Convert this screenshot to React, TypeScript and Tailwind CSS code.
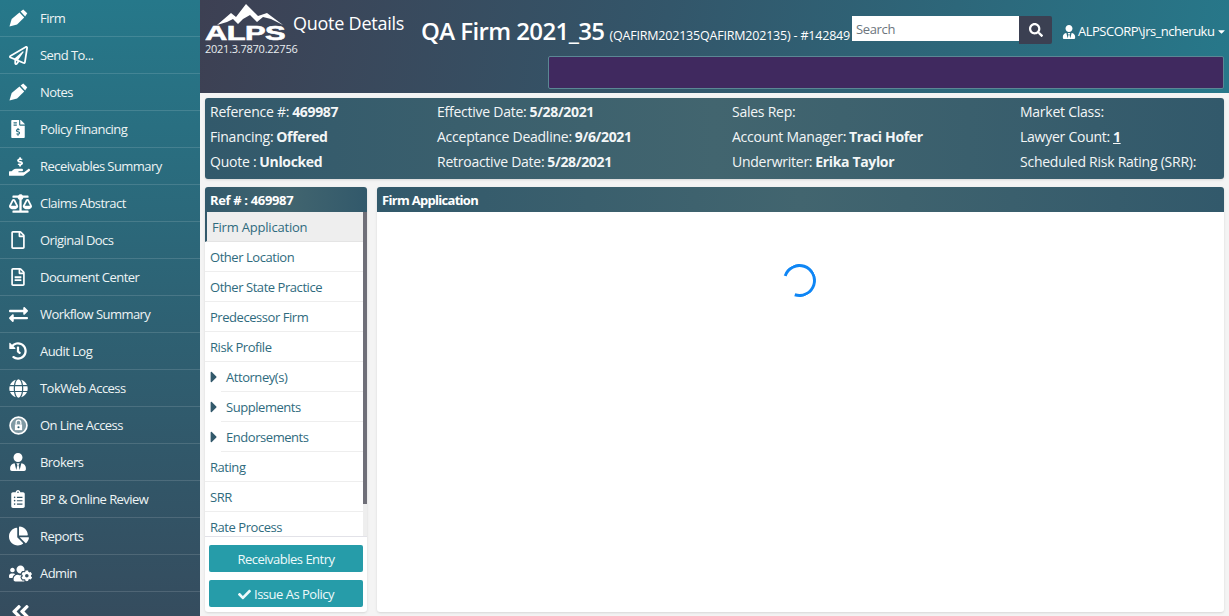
import type { ComponentType, ReactNode } from 'react';
import {
  FaAngleDoubleLeft,
  FaBalanceScale,
  FaCaretDown,
  FaCaretRight,
  FaChartPie,
  FaCheck,
  FaClipboardList,
  FaExchangeAlt,
  FaFileInvoiceDollar,
  FaGlobe,
  FaHandHoldingUsd,
  FaHistory,
  FaRegFile,
  FaRegFileAlt,
  FaRegPaperPlane,
  FaSearch,
  FaUserTie,
  FaUsersCog,
} from 'react-icons/fa';

const FatPen = ({ size = 20 }: { size?: number }) => (
  <svg width={size} height={size} viewBox="0 0 20 20" fill="white">
    <path d="M0.5 18.5 L2.8 10.5 L11 3.6 L16 9 L8.5 16.2 Z" />
    <path d="M12.2 2.6 L15 0.4 L19.2 4.4 L17 7.8 Z" />
  </svg>
);

const LockCircle = ({ size = 18 }: { size?: number }) => (
  <svg width={size} height={size} viewBox="0 0 18 18" fill="white">
    <circle cx="9" cy="9" r="8" fill="#7f99a3" stroke="white" strokeWidth="1.6" />
    <path d="M5.6 8h6.8v5.4H5.6z" />
    <path d="M6.8 8V6a2.2 2.2 0 0 1 4.4 0V8" fill="none" stroke="white" strokeWidth="1.2" />
    <circle cx="9" cy="10.6" r="1" fill="#2f5f70" />
  </svg>
);

const navItems: { label: string; icon: ComponentType<{ size?: number }>; size?: number }[] = [
  { label: 'Firm', icon: FatPen },
  { label: 'Send To...', icon: FaRegPaperPlane },
  { label: 'Notes', icon: FatPen },
  { label: 'Policy Financing', icon: FaFileInvoiceDollar, size: 18 },
  { label: 'Receivables Summary', icon: FaHandHoldingUsd, size: 21 },
  { label: 'Claims Abstract', icon: FaBalanceScale, size: 23 },
  { label: 'Original Docs', icon: FaRegFile, size: 18 },
  { label: 'Document Center', icon: FaRegFileAlt, size: 18 },
  { label: 'Workflow Summary', icon: FaExchangeAlt, size: 19 },
  { label: 'Audit Log', icon: FaHistory, size: 18 },
  { label: 'TokWeb Access', icon: FaGlobe, size: 19 },
  { label: 'On Line Access', icon: LockCircle, size: 19 },
  { label: 'Brokers', icon: FaUserTie, size: 18 },
  { label: 'BP & Online Review', icon: FaClipboardList, size: 18 },
  { label: 'Reports', icon: FaChartPie, size: 20 },
  { label: 'Admin', icon: FaUsersCog, size: 23 },
];

const menuItems: { label: string; caret?: boolean }[] = [
  { label: 'Other Location' },
  { label: 'Other State Practice' },
  { label: 'Predecessor Firm' },
  { label: 'Risk Profile' },
  { label: 'Attorney(s)', caret: true },
  { label: 'Supplements', caret: true },
  { label: 'Endorsements', caret: true },
  { label: 'Rating' },
  { label: 'SRR' },
  { label: 'Rate Process' },
];

const panelHead = 'bg-[linear-gradient(90deg,#32596b,#42656f_50%,#32596b)]';

const Info = ({ label, children }: { label: string; children?: ReactNode }) => (
  <div className="h-[25px] flex items-center gap-[3px] whitespace-nowrap">
    <span>{label}</span>
    {children && <span className="font-bold tracking-[-0.35px]">{children}</span>}
  </div>
);

const Logo = () => (
  <svg width="82" height="42" viewBox="0 0 82 42" className="block">
    <path
      d="M12 23 L26 11 L31 15 L41 2 L53 14 L62 11 L78 23 L66 17 L58 15 L52 20 L45 13 L38 17 L33 22 L28 17 L22 20 Z"
      fill="white"
    />
    <text
      x="0"
      y="38"
      fill="white"
      stroke="white"
      strokeWidth="0.6"
      fontFamily="'Liberation Sans', sans-serif"
      fontWeight="700"
      fontSize="20"
      textLength="80"
      lengthAdjust="spacingAndGlyphs"
    >
      ALPS
    </text>
  </svg>
);

export default function App() {
  return (
    <div className="flex h-[616px] w-[1229px] overflow-hidden bg-[#f4f4f4] font-['Open_Sans','Noto_Sans',sans-serif] text-[13px] tracking-[-0.35px]">
      {/* Side nav */}
      <nav className="w-[200px] h-full shrink-0 overflow-hidden bg-[linear-gradient(180deg,#26788a,#354c5e)] text-[#eef4f5] tracking-[-0.55px]">
        {navItems.map(({ label, icon: Icon, size }) => (
          <div key={label} className="h-[37px] flex items-center border-b border-[#ffffff22] font-medium">
            <span className="w-[40px] pl-[9px] flex items-center text-white">
              <Icon size={size ?? 19} />
            </span>
            <span className="pt-[2px]">{label}</span>
          </div>
        ))}
        <div className="pl-[10px] pt-[9px] text-white">
          <FaAngleDoubleLeft size={21} />
        </div>
      </nav>

      <div className="flex-1 min-w-0 flex flex-col">
        {/* Header */}
        <header className="h-[93px] shrink-0 flex flex-col bg-[linear-gradient(100deg,#3d4053,#33566a_45%,#27788a)] text-white pl-[5px]">
          <div className="h-[56px] flex">
            <div className="w-[88px] shrink-0 pt-[2px]">
              <Logo />
              <div className="text-[11px] leading-[11px] font-medium text-[#e8edf0] tracking-[-0.25px] mt-[-1px] whitespace-nowrap">2021.3.7870.22756</div>
            </div>
            <div className="w-[128px] shrink-0 pt-[11px] text-[18px] leading-[24px] tracking-[-0.25px] whitespace-nowrap">Quote Details</div>
            <div className="w-[431px] shrink-0 pt-[16px] flex items-baseline whitespace-nowrap">
              <span className="text-[24px] leading-[30px] font-semibold tracking-[-0.6px]">QA Firm 2021_35</span>
              <span className="ml-[5px] text-[12.5px] tracking-[-0.2px]">(QAFIRM202135QAFIRM202135) - #142849</span>
            </div>
            <div className="flex shrink-0 items-start pt-[16px]">
              <input
                placeholder="Search"
                readOnly
                className="w-[167px] h-[25px] bg-white pl-[4px] text-[13px] text-[#333] placeholder:text-[#6c757d] outline-none"
              />
              <button className="w-[33px] h-[28px] bg-[#3b4052] rounded-r-[2px] flex items-center justify-center text-white">
                <FaSearch size={14} />
              </button>
            </div>
            <div className="ml-[10px] shrink-0 pt-[24px] flex items-center h-[39px] gap-[2px] whitespace-nowrap tracking-[-0.5px]">
              <FaUserTie size={14} />
              <span>ALPSCORP\jrs_ncheruku</span>
              <FaCaretDown size={11} />
            </div>
          </div>
          <div className="ml-auto mr-[5px] w-[676px] h-[33px] bg-[#40295f] border border-[#5b8794] rounded-[2px]" />
        </header>

        <main className="flex-1 min-h-0 flex flex-col pt-[5px] pl-[5px] pr-[5px] pb-[4px] gap-[8px]">
          {/* Quote summary */}
          <section className={`h-[81px] shrink-0 rounded-[3px] pl-[5px] pt-[1px] text-[#f3f6f7] text-[14px] tracking-[-0.25px] grid grid-cols-[227px_295px_288px_1fr] shadow-sm ${panelHead}`}>
            <div>
              <Info label="Reference #:">469987</Info>
              <Info label="Financing:">Offered</Info>
              <Info label="Quote :">Unlocked</Info>
            </div>
            <div>
              <Info label="Effective Date:">5/28/2021</Info>
              <Info label="Acceptance Deadline:">9/6/2021</Info>
              <Info label="Retroactive Date:">5/28/2021</Info>
            </div>
            <div>
              <Info label="Sales Rep:" />
              <Info label="Account Manager:">Traci Hofer</Info>
              <Info label="Underwriter:">Erika Taylor</Info>
            </div>
            <div>
              <Info label="Market Class:" />
              <Info label="Lawyer Count:"><span className="underline">1</span></Info>
              <Info label="Scheduled Risk Rating (SRR):" />
            </div>
          </section>

          <div className="flex-1 min-h-0 flex gap-[10px]">
            {/* Left menu */}
            <aside className="w-[162px] shrink-0 flex flex-col rounded-[3px] bg-white shadow-sm overflow-hidden">
              <div className={`h-[25px] shrink-0 flex items-center pl-[5px] pt-[2px] font-bold text-white ${panelHead}`}>Ref # : 469987</div>
              <div className="h-[325px] shrink-0 flex overflow-hidden border-b border-[#e2e2e8]">
                <ul className="w-[158px] shrink-0 text-[#2f6b7e] tracking-[-0.45px]">
                  <li className="h-[30px] flex items-center pl-[5px] pt-[2px] bg-[#eeeeee] border-l-2 border-[#32596b] border-b border-b-[#e4e4e4] font-medium tracking-[-0.2px]">Firm Application</li>
                  {menuItems.map(({ label, caret }) => (
                    <li key={label} className="h-[30px] flex items-center">
                      {caret && (
                        <span className="w-[16px] text-[#32596b] shrink-0">
                          <FaCaretRight size={18} />
                        </span>
                      )}
                      <span className="h-full flex-1 flex items-center pl-[5px] pt-[2px] border-b border-[#eeeeee]">{label}</span>
                    </li>
                  ))}
                </ul>
                <div className="w-[4px] bg-[#eeeeee]">
                  <div className="h-[292px] bg-[#6f6f78]" />
                </div>
              </div>
              <div className="flex-1 flex flex-col gap-[8px] px-[4px] pt-[8px] text-[#eefafb] tracking-[-0.5px]">
                <button className="h-[27px] pt-[2px] rounded-[2px] bg-[#269ca9]">Receivables Entry</button>
                <button className="h-[27px] pt-[2px] rounded-[2px] bg-[#269ca9] flex items-center justify-center gap-[3px]">
                  <FaCheck size={13} />
                  Issue As Policy
                </button>
              </div>
            </aside>

            {/* Content */}
            <section className="flex-1 min-w-0 flex flex-col rounded-[3px] bg-white shadow-sm overflow-hidden">
              <div className={`h-[25px] shrink-0 flex items-center pl-[5px] pt-[2px] font-bold text-white tracking-[-0.7px] ${panelHead}`}>Firm Application</div>
              <div className="flex-1 flex justify-center pt-[52px] pr-[2px]">
                <div className="w-[33px] h-[33px] rounded-full border-[3px] border-[#0f86f5] border-l-transparent rotate-[-27deg]" />
              </div>
            </section>
          </div>
        </main>
      </div>
    </div>
  );
}
